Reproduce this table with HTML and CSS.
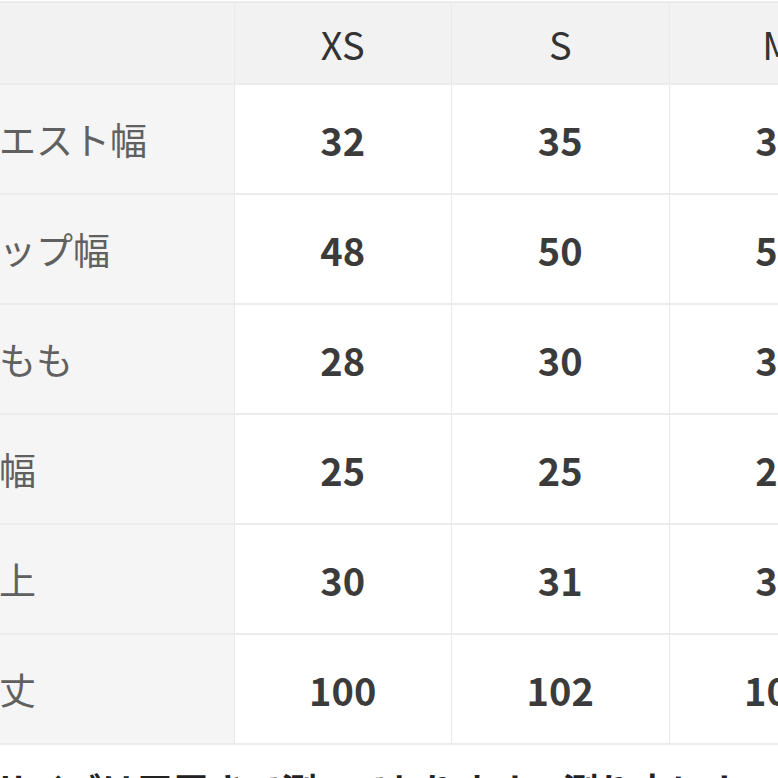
FILE: index.html
```html
<!DOCTYPE html>
<html lang="ja">
<head>
<meta charset="utf-8">
<link rel="stylesheet" href="styles.css">
</head>
<body>
<div class="page">
  <table class="size-table">
    <colgroup>
      <col class="c-label"><col class="c-size"><col class="c-size"><col class="c-size"><col class="c-size">
    </colgroup>
    <thead>
      <tr><th class="label"></th><th>XS</th><th>S</th><th>M</th><th>L</th></tr>
    </thead>
    <tbody>
      <tr><th class="label">ウエスト幅</th><td>32</td><td>35</td><td>38</td><td>41</td></tr>
      <tr><th class="label">ヒップ幅</th><td>48</td><td>50</td><td>52</td><td>54</td></tr>
      <tr><th class="label">太もも</th><td>28</td><td>30</td><td>32</td><td>34</td></tr>
      <tr><th class="label">裾幅</th><td>25</td><td>25</td><td>26</td><td>27</td></tr>
      <tr><th class="label">股上</th><td>30</td><td>31</td><td>32</td><td>33</td></tr>
      <tr><th class="label">総丈</th><td>100</td><td>102</td><td>104</td><td>106</td></tr>
    </tbody>
  </table>
  <p class="note">サイズは平置きで測っております。測り方によっては多少の誤差が生じる場合がございます。</p>
</div>
</body>
</html>
```

FILE: styles.css
```css
html, body {
  margin: 0;
  padding: 0;
  background: #ffffff;
}

body {
  width: 778px;
  height: 778px;
  overflow: hidden;
  font-family: "Noto Sans CJK JP", "Noto Sans", sans-serif;
}

.page {
  margin-left: -60px;
  padding-top: 1px;
  width: 1200px;
}

.size-table {
  border-collapse: collapse;
  table-layout: fixed;
  width: 1163px;
}

.c-label { width: 294px; }
.c-size { width: 217.5px; }

.size-table th,
.size-table td {
  border-top: 2px solid #ececec;
  border-left: 1px solid #e9e9e9;
  text-align: center;
  vertical-align: middle;
  padding: 0;
}

.size-table thead th {
  height: 80px;
  background: #f2f2f2;
  font-weight: 400;
  font-size: 38px;
  color: #333333;
}

.size-table tbody td,
.size-table tbody th {
  height: 108px;
}

.size-table tbody td {
  background: #ffffff;
  font-weight: 700;
  font-size: 38px;
  color: #3b3b3b;
}

.size-table th.label {
  background: #f5f5f5;
  text-align: left;
  padding-left: 22px;
  font-weight: 400;
  font-size: 37px;
  color: #606060;
  border-left: none;
}

.size-table thead th.label {
  background: #f2f2f2;
}

.size-table tbody tr:last-child td,
.size-table tbody tr:last-child th {
  border-bottom: 2px solid #ececec;
}

.note {
  margin: 19px 0 0 54px;
  font-size: 36px;
  font-weight: 700;
  color: #222222;
  white-space: nowrap;
  line-height: 1.4;
}
```
